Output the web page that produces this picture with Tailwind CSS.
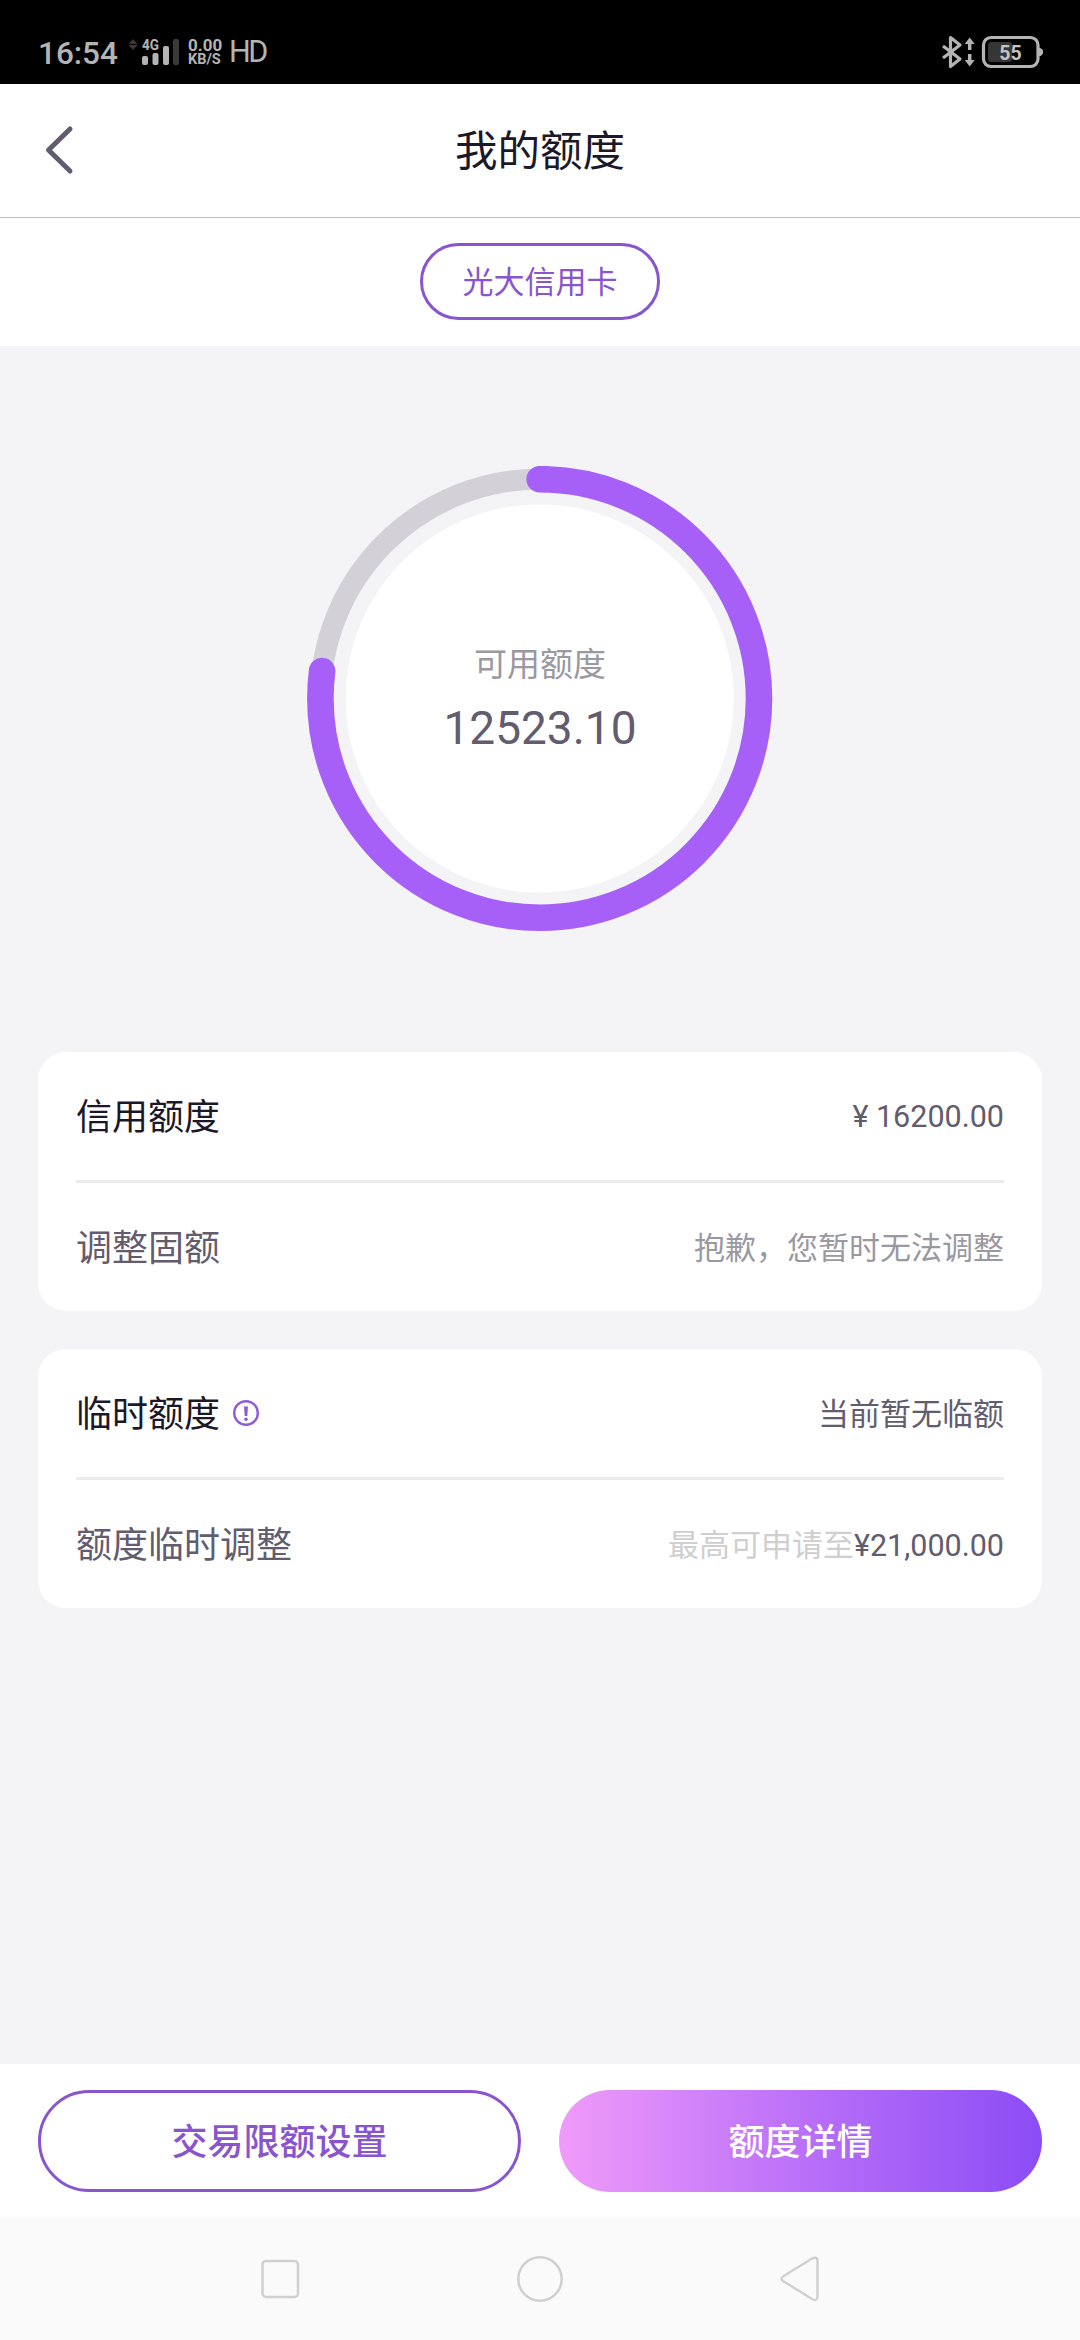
<!DOCTYPE html>
<html lang="zh-CN">
<head>
  <meta charset="utf-8" />
  <title>我的额度</title>
  <script src="https://cdn.jsdelivr.net/npm/@tailwindcss/browser@4"></script>
</head>
<body class="w-[1080px] h-[2340px] flex flex-col overflow-hidden bg-[#f4f4f6] text-[#1c1828] leading-none
             font-[Roboto,'Noto_Sans_CJK_SC',sans-serif]">

  <!-- STATUS BAR -->
  <div class="h-[84px] shrink-0 bg-black text-[#b4b4b4] flex items-start justify-between pl-[38px] pr-[37px]">
    <div class="flex items-start">
      <span class="w-[91px] pt-[38px] text-[31.5px] font-medium">16:54</span>
      <svg class="w-[51px] h-[84px]" viewBox="129 0 51 84">
        <path d="M133 39l4.5 5h-9zM133 50l4.5-5h-9z" fill="#3a3a3a"/>
        <text x="142" y="50" font-size="15" font-weight="700" textLength="17" lengthAdjust="spacingAndGlyphs" fill="#b4b4b4">4G</text>
        <g fill="#b4b4b4">
          <rect x="142" y="56" width="6" height="9" rx="2"/>
          <rect x="152.500" y="53" width="6" height="12" rx="2"/>
          <rect x="163" y="46" width="6" height="19" rx="2"/>
        </g>
        <rect x="173" y="39" width="6" height="26" rx="2" fill="#3a3a3a"/>
      </svg>
      <div class="w-[42px] pl-[8px] pt-[38px] font-bold whitespace-nowrap">
        <div class="text-[17px] leading-[15px]">0.00</div>
        <div class="text-[14.5px] leading-[14px]">KB/S</div>
      </div>
      <span class="pl-[7px] pt-[37px] text-[30.500px] tracking-[-2.500px]">HD</span>
    </div>
    <svg class="w-[103px] h-[84px]" viewBox="940 0 103 84" fill="none" stroke="#b4b4b4" stroke-width="3.200">
      <path d="M943 46l17 13-9.500 7.500v-29l9.500 7.500-17 13" stroke-linejoin="round"/>
      <path d="M969.700 50V41M969.700 54v9" stroke-width="3.500"/>
      <path d="M969.700 37.500l5 6.500h-10zM969.700 66.500l5-6.500h-10z" fill="#b4b4b4" stroke="none"/>
      <rect x="983.500" y="37.500" width="54.500" height="29" rx="7.500"/>
      <path d="M1039 49.500a2.500 2.500 0 0 1 0 5z" fill="#b4b4b4"/>
      <rect x="988" y="42" width="24" height="20" rx="3" fill="#363636" stroke="none"/>
      <text x="1010.500" y="60" text-anchor="middle" font-size="19.500" font-weight="700" fill="#c4c4c4" stroke="none">55</text>
    </svg>
  </div>

  <!-- HEADER -->
  <header class="relative h-[134px] shrink-0 bg-white border-b border-[#bdbdbd] flex items-center justify-center">
    <svg class="absolute left-[40px] top-[36px] w-[40px] h-[60px]" viewBox="40 120 40 60" fill="none">
      <path d="M70 129L48.500 150L70 171" stroke="#625c6e" stroke-width="5" stroke-linecap="round" stroke-linejoin="round"/>
    </svg>
    <h1 class="pt-[4px] text-[42.500px]">我的额度</h1>
  </header>

  <div class="h-[128px] shrink-0 bg-white flex items-start justify-center pt-[25px]">
    <div class="w-[240px] h-[77px] pt-[2px] rounded-full border-3 border-[#8855cf] text-[#8855cf] text-[31px] flex items-center justify-center">光大信用卡</div>
  </div>

  <main class="flex-1 flex flex-col px-[38px]">
    <!-- quota ring -->
    <div class="relative mt-[120px] w-[466px] h-[466px] shrink-0 self-center">
      <svg class="w-full h-full" viewBox="0 0 466 466" fill="none">
        <circle cx="232.700" cy="232.500" r="219.300" stroke="#d3d0d7" stroke-width="21"/>
        <circle cx="232.700" cy="232.500" r="194" fill="#fff"/>
        <circle cx="232.700" cy="232.500" r="219.300" stroke="#a660f7" stroke-width="26.600" stroke-linecap="round"
                pathLength="100" stroke-dasharray="77 100" transform="rotate(-90 232.700 232.500)"/>
      </svg>
      <div class="absolute inset-0 flex flex-col items-center">
        <div class="mt-[182px] text-[33px] text-[#9a98a0]">可用额度</div>
        <div class="mt-[24px] text-[46px] text-[#625c6e]">12523.10</div>
      </div>
    </div>

    <section class="mt-[120px] h-[259px] shrink-0 rounded-[28px] bg-white px-[38px] flex flex-col">
      <div class="flex-1 pt-[3px] flex items-center justify-between border-b-3 border-[#ebebeb]">
        <span class="text-[36px]">信用额度</span>
        <span class="text-[30.500px] text-[#625c6e]">¥ 16200.00</span>
      </div>
      <div class="h-[128px] pt-[3px] flex items-center justify-between">
        <span class="text-[36px] text-[#625c6e]">调整固额</span>
        <span class="text-[31px] text-[#9a98a0]">抱歉，您暂时无法调整</span>
      </div>
    </section>

    <section class="mt-[38px] h-[259px] shrink-0 rounded-[28px] bg-white px-[38px] flex flex-col">
      <div class="flex-1 pt-[3px] flex items-center justify-between border-b-3 border-[#ebebeb]">
        <span class="flex items-center gap-[13px] text-[36px]">
          临时额度
          <svg class="w-[26px] h-[26px] mb-[3px]" viewBox="0 0 26 26">
            <circle cx="13" cy="13" r="11.800" fill="none" stroke="#8f5ad8" stroke-width="2.400"/>
            <path d="M11 6.500h4l-.7 9.500h-2.600z" fill="#8f5ad8"/>
            <circle cx="13" cy="19.300" r="1.800" fill="#8f5ad8"/>
          </svg>
        </span>
        <span class="text-[31px] text-[#625c6e]">当前暂无临额</span>
      </div>
      <div class="h-[128px] pt-[3px] flex items-center justify-between">
        <span class="text-[36px] text-[#625c6e]">额度临时调整</span>
        <span class="text-[31px] text-[#cfcfcf]">最高可申请至<span class="text-[30.500px] text-[#625c6e]">¥21,000.00</span></span>
      </div>
    </section>
  </main>

  <!-- ACTIONS -->
  <div class="h-[154px] shrink-0 bg-white px-[38px] flex items-center justify-between text-[36px] font-medium">
    <button class="w-[483px] h-[102px] pt-[3px] rounded-full border-3 border-[#8855cf] text-[#8855cf]">交易限额设置</button>
    <button class="w-[483px] h-[102px] pt-[3px] rounded-full text-white bg-[linear-gradient(90deg,#f09bfa,#b56cf8_55%,#8b4cf5)]">额度详情</button>
  </div>

  <!-- SYSTEM NAV -->
  <nav class="h-[122px] shrink-0 bg-[#fafafa]">
    <svg class="w-[1080px] h-[122px]" viewBox="0 2218 1080 122" fill="none" stroke="#d0d0d0" stroke-width="2.500">
      <rect x="262.500" y="2261" width="35.500" height="36" rx="3.500"/>
      <circle cx="540" cy="2279" r="21.700"/>
      <path d="M783 2276.500L812 2258.500Q817.500 2256 817.500 2261V2296Q817.500 2302 812 2299L783 2281Q780 2278.700 783 2276.500Z"/>
    </svg>
  </nav>
</body>
</html>
